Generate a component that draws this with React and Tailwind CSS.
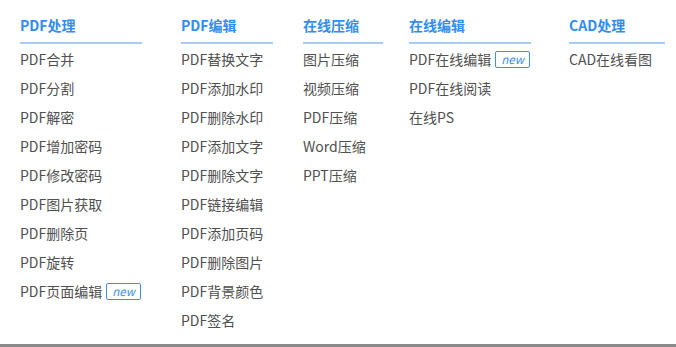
const columns = [
  {
    title: "PDF处理",
    width: "w-[122px]",
    gap: "mr-[39px]",
    items: ["PDF合并", "PDF分割", "PDF解密", "PDF增加密码", "PDF修改密码", "PDF图片获取", "PDF删除页", "PDF旋转", { label: "PDF页面编辑", isNew: true }],
  },
  {
    title: "PDF编辑",
    width: "w-[92px]",
    gap: "mr-[30px]",
    items: ["PDF替换文字", "PDF添加水印", "PDF删除水印", "PDF添加文字", "PDF删除文字", "PDF链接编辑", "PDF添加页码", "PDF删除图片", "PDF背景颜色", "PDF签名"],
  },
  {
    title: "在线压缩",
    width: "w-[80px]",
    gap: "mr-[26px]",
    items: ["图片压缩", "视频压缩", "PDF压缩", "Word压缩", "PPT压缩"],
  },
  {
    title: "在线编辑",
    width: "w-[122px]",
    gap: "mr-[38px]",
    items: [{ label: "PDF在线编辑", isNew: true }, "PDF在线阅读", "在线PS"],
  },
  {
    title: "CAD处理",
    width: "w-[96px]",
    gap: "",
    items: ["CAD在线看图"],
  },
];

function NewTag() {
  return (
    <span className="ml-[4px] inline-flex h-[17px] items-center rounded-[2px] border border-[#3d90ea] px-[5px] text-[11.5px] italic leading-none text-[#3d90ea]">
      new
    </span>
  );
}

export default function App() {
  return (
    <div
      className="flex h-[347px] w-[676px] flex-col bg-white"
      style={{ fontFamily: '"Noto Sans CJK SC", "Noto Sans", sans-serif' }}
    >
      <div className="flex flex-1 pl-[20px] pt-[14px]">
        {columns.map((col) => (
          <div key={col.title} className={`${col.width} ${col.gap} shrink-0`}>
            <div className="h-[30px] border-b-2 border-[#a7cbf4] text-[14px] font-bold leading-[22px] text-[#2f8ef0]">
              {col.title}
            </div>
            <ul className="pt-[1px]">
              {col.items.map((it) => {
                const label = typeof it === "string" ? it : it.label;
                return (
                  <li key={label} className="flex h-[29px] items-center whitespace-nowrap text-[14px] text-[#505050]">
                    {label}
                    {typeof it !== "string" && it.isNew && <NewTag />}
                  </li>
                );
              })}
            </ul>
          </div>
        ))}
      </div>
      <div className="h-[3px] bg-[#8a8a8a]" />
    </div>
  );
}
